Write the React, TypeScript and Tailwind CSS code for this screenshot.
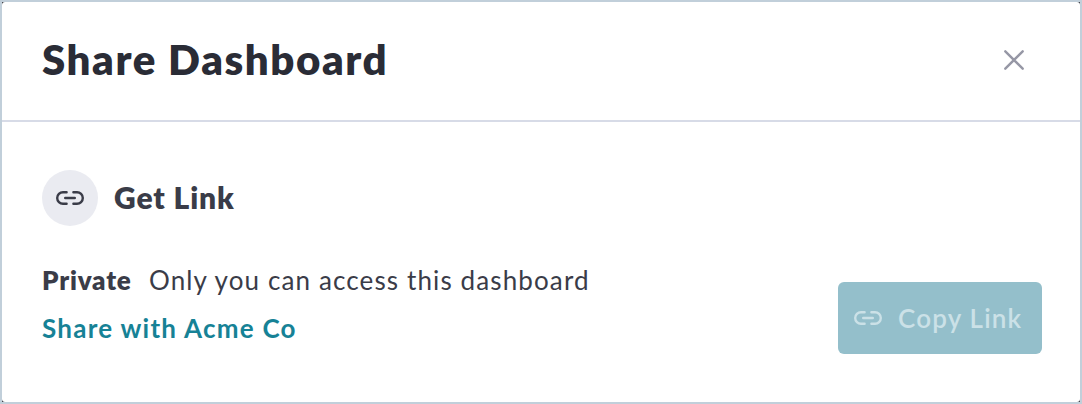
type IconProps = {
  className?: string;
};

function LinkIcon({ className }: IconProps) {
  return (
    <svg
      viewBox="0 0 28 14"
      fill="none"
      stroke="currentColor"
      strokeWidth={2.4}
      strokeLinecap="round"
      className={className}
    >
      <path d="M10.6 1.2H7a5.8 5.8 0 0 0 0 11.6h3.6" />
      <path d="M17.4 1.2H21a5.8 5.8 0 0 1 0 11.6h-3.6" />
      <path d="M9.2 7h9.6" />
    </svg>
  );
}

function CloseIcon({ className }: IconProps) {
  return (
    <svg
      viewBox="0 0 20 20"
      fill="none"
      stroke="currentColor"
      strokeWidth={2.4}
      strokeLinecap="round"
      className={className}
    >
      <path d="M1.3 1.3l17.4 17.4M18.7 1.3L1.3 18.7" />
    </svg>
  );
}

export default function App() {
  return (
    <div className="h-[404px] w-[1082px] border-2 border-[#c1cfda] bg-[#33363e] font-[Lato,sans-serif] text-[#3a3c48]">
      <div className="flex h-full flex-col rounded-[3px] bg-white">
        <header className="flex h-[120px] items-center justify-between border-b-2 border-[#d7dbe7] pr-[56px] pb-[3px] pl-10">
          <h2 className="pb-[2px] text-[42px] leading-[48px] font-extrabold tracking-[1.57px] whitespace-nowrap text-[#2a2c36]">
            Share Dashboard
          </h2>
          <button type="button" aria-label="Close" className="text-[#9697a5]">
            <CloseIcon className="h-5 w-5" />
          </button>
        </header>

        <div className="px-10 pt-12">
          <div className="flex items-center gap-4">
            <div className="flex h-14 w-14 items-center justify-center rounded-full bg-[#eaebf1]">
              <LinkIcon className="h-[14px] w-7" />
            </div>
            <h3 className="pb-[2px] text-[30px] leading-9 font-extrabold tracking-[0.9px]">Get Link</h3>
          </div>
        </div>

        <div className="flex items-start justify-between pt-8 pr-[38px] pl-10">
          <div className="text-[26px] leading-[48px] whitespace-nowrap">
            <div className="-mt-[2px] flex">
              <span className="w-[107px] font-extrabold tracking-[0.8px]">Private</span>
              <span className="tracking-[1.12px]">Only you can access this dashboard</span>
            </div>
            <a href="#" className="block font-bold tracking-[1.25px] text-[#168296]">
              Share with Acme Co
            </a>
          </div>
          <button
            type="button"
            disabled
            className="mt-6 flex h-[72px] w-[204px] items-center gap-4 rounded-md bg-[#94bfcb] pl-4 text-[26px] font-semibold tracking-[1.2px] text-[#cbe1e7]"
          >
            <LinkIcon className="h-[14px] w-7 shrink-0" />
            <span className="whitespace-nowrap">Copy Link</span>
          </button>
        </div>
      </div>
    </div>
  );
}
